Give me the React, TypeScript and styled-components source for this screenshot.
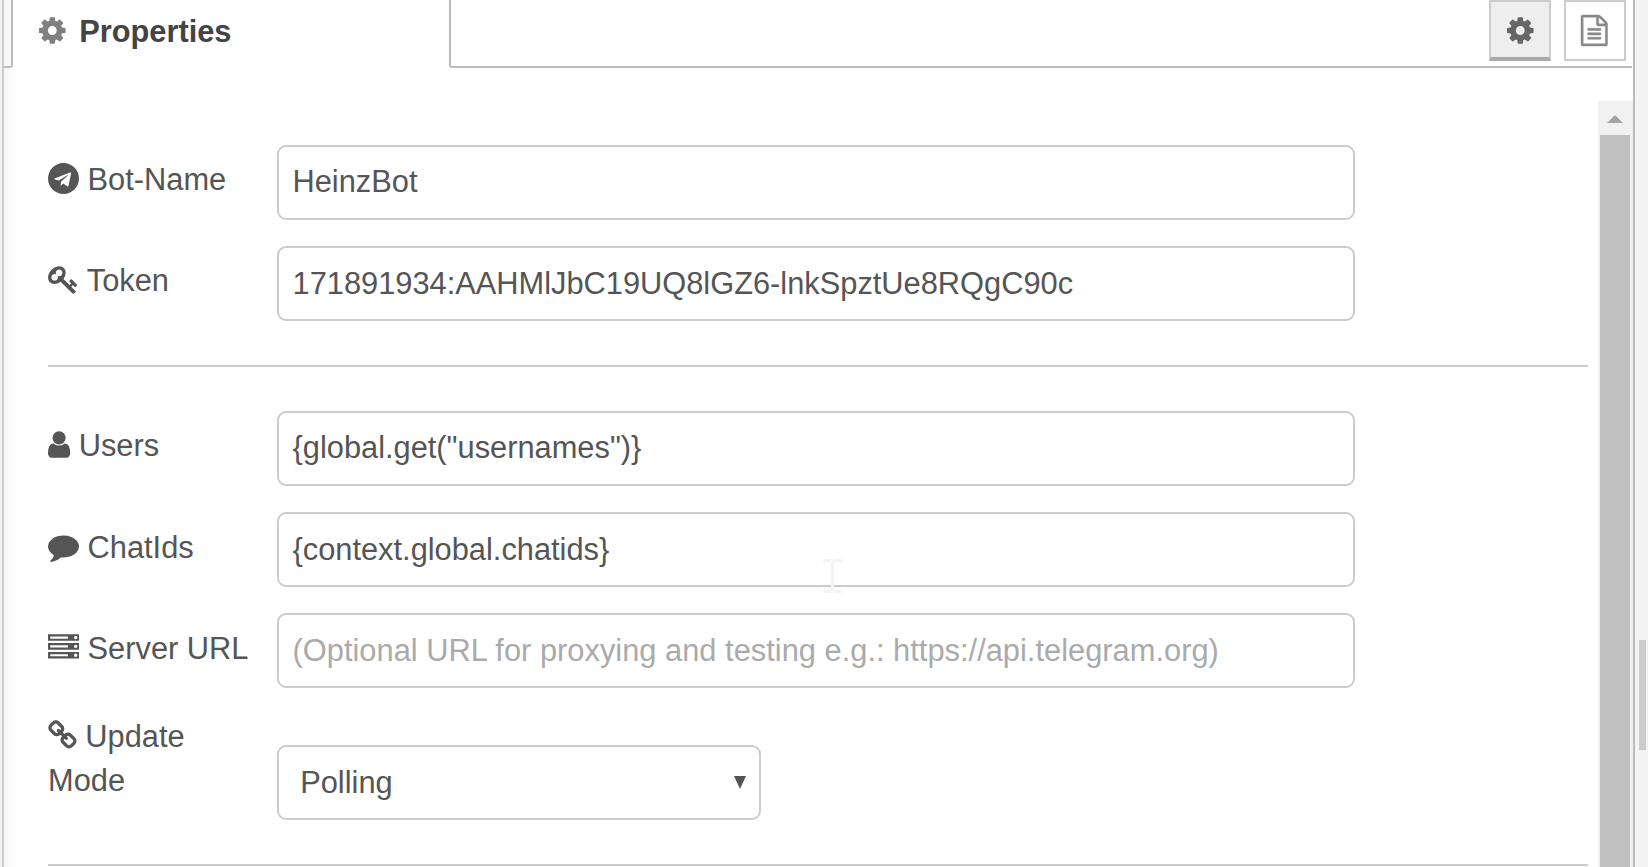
import React from "react";
import styled, { createGlobalStyle, css } from "styled-components";

const GlobalStyle = createGlobalStyle`
  body {
    margin: 0;
    background: #f3f3f3;
    overflow: hidden;
  }
  * { box-sizing: border-box; }
`;

const icons = {
  cog: {
    x: 128, w: 1536,
    d: "M1152 896q0-106-75-181t-181-75-181 75-75 181 75 181 181 75 181-75 75-181zm512-109v222q0 12-8 23t-20 13l-185 28q-19 54-39 91 35 50 107 138 10 12 10 25t-9 23q-27 37-99 108t-94 71q-12 0-26-9l-138-108q-44 23-91 38-16 136-29 186-7 28-36 28h-222q-14 0-24.5-8.5t-11.5-21.5l-28-184q-49-16-90-37l-141 107q-10 9-25 9-14 0-25-11-126-114-165-168-7-10-7-23 0-12 8-23 15-21 51-66.5t54-70.5q-27-50-41-99l-183-27q-13-2-21-12.5t-8-23.5v-222q0-12 8-23t19-13l186-28q14-46 39-92-40-57-107-138-10-12-10-24 0-10 9-23 26-36 98.5-107.5t94.5-71.5q13 0 26 10l138 107q44-23 91-38 16-136 29-186 7-28 36-28h222q14 0 24.5 8.5t11.5 21.5l28 184q49 16 90 37l142-107q9-9 24-9 13 0 25 10 129 119 165 170 7 8 7 22 0 12-8 23-15 21-51 66.5t-54 70.5q26 50 41 98l183 28q13 2 21 12.5t8 23.5z",
  },
  file: {
    x: 128, w: 1536,
    d: "M1596 380q28 28 48 76t20 88v1152q0 40-28 68t-68 28h-1344q-40 0-68-28t-28-68v-1600q0-40 28-68t68-28h896q40 0 88 20t76 48zm-444-244v376h376q-10-29-22-41l-313-313q-12-12-41-22zm384 1528v-1024h-416q-40 0-68-28t-28-68v-416h-768v1536h1280zm-1024-864q0-14 9-23t23-9h704q14 0 23 9t9 23v64q0 14-9 23t-23 9h-704q-14 0-23-9t-9-23v-64zm736 224q14 0 23 9t9 23v64q0 14-9 23t-23 9h-704q-14 0-23-9t-9-23v-64q0-14 9-23t23-9h704zm0 256q14 0 23 9t9 23v64q0 14-9 23t-23 9h-704q-14 0-23-9t-9-23v-64q0-14 9-23t23-9h704z",
  },
  telegram: {
    x: 0, w: 1792,
    d: "M1189 1307l147-693q9-44-10.5-63t-51.5-7l-864 333q-29 11-39.5 25t-2.5 26.5 32 19.5l221 69 513-323q21-14 32-6 7 5-4 15l-415 375-16 228q23 0 45-22l108-104 224 165q64 36 81-38zm603-411q0 182-71 348t-191 286-286 191-348 71-348-71-286-191-191-286-71-348 71-348 191-286 286-191 348-71 348 71 286 191 191 286 71 348z",
  },
  key: {
    x: 0, w: 1780,
    d: "M832 512q0-80-56-136t-136-56-136 56-56 136q0 42 19 83-41-19-83-19-80 0-136 56t-56 136 56 136 136 56 136-56 56-136q0-42-19-83 41 19 83 19 80 0 136-56t56-136zm851 704q0 17-49 66t-66 49q-9 0-28.5-16t-36.5-33-38.5-40-24.5-26l-96 96 220 220q28 28 28 68 0 42-39 81t-81 39q-40 0-68-28l-671-671q-176 131-365 131-163 0-265.5-102.5t-102.5-265.5q0-160 95-313t248-248 313-95q163 0 265.5 102.5t102.5 265.5q0 189-131 365l355 355 96-96q-3-3-26-24.5t-40-38.5-33-36.5-16-28.5q0-17 49-66t66-49q13 0 23 10 6 6 46 44.5t82 79.5 86.5 86 73 78 28.5 41z",
  },
  user: {
    x: 256, w: 1280,
    d: "M1536 1399q0 109-62.5 187t-150.5 78h-854q-88 0-150.5-78t-62.5-187q0-85 8.5-160.5t31.5-152 58.5-131 94-89 134.5-34.5q131 128 313 128t313-128q76 0 134.5 34.5t94 89 58.5 131 31.5 152 8.5 160.5zm-256-887q0 159-112.5 271.5t-271.5 112.5-271.5-112.5-112.5-271.5 112.5-271.5 271.5-112.5 271.5 112.5 112.5 271.5z",
  },
  comment: {
    x: 0, w: 1792,
    d: "M1792 896q0 174-120 321.5t-326 233-450 85.5q-70 0-145-8-198 175-460 242-49 14-114 22-17 2-30.5-9t-17.5-29v-1q-3-4-.5-12t2-10 4.5-9.5l6-9 7-8.5 8-9q7-8 31-34.5t34.5-38 31-39.5 32.5-51 27-59 26-76q-157-89-247.5-220t-90.5-281q0-130 71-248.5t191-204.5 286-136.5 348-50.5q244 0 450 85.5t326 233 120 321.5z",
  },
  server: {
    x: 0, w: 1792,
    d: "M128 1408h1024v-128h-1024v128zm0-512h1024v-128h-1024v128zm1568 448q0-40-28-68t-68-28-68 28-28 68 28 68 68 28 68-28 28-68zm-1568-960h1024v-128h-1024v128zm1568 448q0-40-28-68t-68-28-68 28-28 68 28 68 68 28 68-28 28-68zm0-512q0-40-28-68t-68-28-68 28-28 68 28 68 68 28 68-28 28-68zm96 832v384h-1792v-384h1792zm0-512v384h-1792v-384h1792zm0-512v384h-1792v-384h1792z",
  },
  chain: {
    x: 64, w: 1664,
    d: "M1520 1216q0-40-28-68l-208-208q-28-28-68-28-42 0-72 32 3 3 19 18.5t21.5 21.5 15 19 13 25.5 3.5 27.5q0 40-28 68t-68 28q-15 0-27.5-3.5t-25.5-13-19-15-21.5-21.5-18.5-19q-33 31-33 73 0 40 28 68l206 207q27 27 68 27 40 0 68-26l147-146q28-28 28-67zm-703-705q0-40-28-68l-206-207q-28-28-68-28-39 0-68 27l-147 146q-28 28-28 67 0 40 28 68l208 208q27 27 68 27 42 0 72-31-3-3-19-18.5t-21.5-21.5-15-19-13-25.5-3.5-27.5q0-40 28-68t68-28q15 0 27.5 3.5t25.5 13 19 15 21.5 21.5 18.5 19q33-31 33-73zm895 705q0 120-85 203l-147 146q-83 83-203 83-121 0-204-85l-206-207q-83-83-83-203 0-123 88-209l-88-88q-86 88-208 88-120 0-204-84l-208-208q-84-84-84-204t85-203l147-146q83-83 203-83 121 0 204 85l206 207q83 83 83 203 0 123-88 209l88 88q86-88 208-88 120 0 204 84l208 208q84 84 84 204z",
  },
};

type IconName = keyof typeof icons;

const Glyph = styled.svg`
  display: inline-block;
  height: 31px;
  vertical-align: -4px;
  fill: currentColor;
  flex: none;
  overflow: visible;
`;

function Icon({ name }: { name: IconName }) {
  const { x, w, d } = icons[name];
  return (
    <Glyph viewBox={`${x} 0 ${w} 1792`} width={(w / 1792) * 31} aria-hidden>
      <path d={d} />
    </Glyph>
  );
}

const Window = styled.div`
  display: flex;
  width: 1648px;
  height: 867px;
  overflow: hidden;
  position: relative;
  padding-left: 2px;
  font-family: "Liberation Sans", Arial, sans-serif;
  font-size: 30.8px;
  line-height: 44px;
  color: #555;
`;

const Panel = styled.main`
  display: flex;
  flex-direction: column;
  width: 1633px;
  border-left: 2px solid #ccc;
  border-right: 2px solid #bbb;
  background: linear-gradient(to right, #f6f6f6, #fff 12px);
`;

const TabBar = styled.header`
  display: flex;
  height: 68px;
  flex: none;
  margin-right: 1px;
`;

const PreviousTab = styled.div`
  width: 9px;
  border: solid #bbb;
  border-width: 0 2px 2px 0;
  border-bottom-right-radius: 3px;
`;

const ActiveTab = styled.h1`
  display: flex;
  align-items: flex-start;
  gap: 13.2px;
  width: 436px;
  margin: 0;
  padding: 10px 0 0 26.4px;
  background: #fff;
  color: #444;
  font-size: 30.8px;
  line-height: 44px;

  svg { color: #808080; margin-top: 5.2px; }
`;

const TabActions = styled.div`
  display: flex;
  flex: 1;
  justify-content: flex-end;
  gap: 13px;
  padding-right: 6px;
  border: solid #bbb;
  border-width: 0 0 2px 2px;
  border-bottom-left-radius: 3px;
  background: #fff;
`;

const ActionButton = styled.button<{ $active?: boolean }>`
  display: flex;
  justify-content: center;
  align-items: center;
  width: 62px;
  height: 61px;
  padding: 0 1px 1px 0;
  border: 2px solid #ccc;
  background: #fff;
  color: #888;

  path {
    stroke: currentColor;
    stroke-width: 26px;
  }

  ${(p) =>
    p.$active &&
    css`
      padding: 1px 0 0;
      border-bottom: 4px solid #aaa;
      background: #eee;
      color: #666;

      path { stroke: none; }
    `}
`;

const Body = styled.div`
  display: flex;
  flex: 1;
  min-height: 0;
  padding-top: 33px;
`;

const Form = styled.form`
  width: 1540px;
  margin: 44px 10px 0 44px;
  flex: none;
`;

const Row = styled.div<{ $height?: number; $last?: boolean }>`
  display: flex;
  height: ${(p) => p.$height ?? 75}px;
  margin-bottom: ${(p) => (p.$last ? 0 : 26)}px;
`;

const Label = styled.label<{ $top: number }>`
  width: 229px;
  flex: none;
  padding-top: ${(p) => p.$top}px;
  white-space: pre-line;
`;

const Field = styled.div<{ $top?: number; $placeholder?: boolean }>`
  width: 1078px;
  height: 75px;
  padding: ${(p) => p.$top ?? 14}px 13.5px 0;
  border: 2px solid #ccc;
  border-radius: 9px;
  background: #fff;
  color: ${(p) => (p.$placeholder ? "#aaa" : "#555")};
  letter-spacing: ${(p) => (p.$placeholder ? "0.02px" : "normal")};
  white-space: nowrap;
`;

const Select = styled(Field)`
  display: flex;
  justify-content: space-between;
  align-items: flex-start;
  align-self: flex-end;
  width: 484px;
  padding: 14px 13.5px 0 21.2px;
`;

const Arrow = styled.i`
  margin-top: 15px;
  border: solid transparent;
  border-width: 13px 6.5px 0;
  border-top-color: #555;
`;

const Divider = styled.hr`
  margin: 44px 0;
  border: 0;
  border-top: 2px solid #ccc;
`;

const Scrollbar = styled.div`
  display: flex;
  flex-direction: column;
  align-items: center;
  width: 35px;
  padding-right: 1px;
  background: #f1f1f1;
`;

const ScrollUp = styled.i`
  margin: 14px 0 12px;
  border: solid transparent;
  border-width: 0 8px 8px;
  border-bottom-color: #a3a3a3;
`;

const ScrollThumb = styled.div`
  width: 30px;
  flex: 1;
  background: #c1c1c1;
`;

const Gutter = styled.aside`
  flex: 1;
  padding: 640px 2px 0 4px;
`;

const GutterThumb = styled.div`
  height: 110px;
  background: #ccc;
`;

const TextCursor = styled.svg`
  position: absolute;
  left: 823px;
  top: 559px;
`;

export default function App() {
  return (
    <Window>
      <GlobalStyle />
      <Panel>
        <TabBar>
          <PreviousTab />
          <ActiveTab>
            <Icon name="cog" />
            Properties
          </ActiveTab>
          <TabActions>
            <ActionButton type="button" aria-label="Properties" $active>
              <Icon name="cog" />
            </ActionButton>
            <ActionButton type="button" aria-label="Description">
              <Icon name="file" />
            </ActionButton>
          </TabActions>
        </TabBar>
        <Body>
          <Form>
            <Row>
              <Label $top={13}><Icon name="telegram" /> Bot-Name</Label>
              <Field $top={13}>HeinzBot</Field>
            </Row>
            <Row $last>
              <Label $top={13}><Icon name="key" /> Token</Label>
              <Field>171891934:AAHMlJbC19UQ8lGZ6-lnkSpztUe8RQgC90c</Field>
            </Row>
            <Divider />
            <Row>
              <Label $top={13}><Icon name="user" /> Users</Label>
              <Field $top={13}>{'{global.get("usernames")}'}</Field>
            </Row>
            <Row>
              <Label $top={14}><Icon name="comment" /> ChatIds</Label>
              <Field>{"{context.global.chatids}"}</Field>
            </Row>
            <Row>
              <Label $top={14}><Icon name="server" /> Server URL</Label>
              <Field $placeholder>
                (Optional URL for proxying and testing e.g.: https://api.telegram.org)
              </Field>
            </Row>
            <Row $height={106} $last>
              <Label $top={1}><Icon name="chain" /> Update{"\n"}Mode</Label>
              <Select>
                Polling
                <Arrow />
              </Select>
            </Row>
            <Divider />
          </Form>
          <Scrollbar>
            <ScrollUp />
            <ScrollThumb />
          </Scrollbar>
        </Body>
      </Panel>
      <Gutter>
        <GutterThumb />
      </Gutter>
      <TextCursor width="19" height="34" viewBox="0 0 19 34" fill="#f3f4f4">
        <path d="M0 0h8v3H0zM11 0h8v3h-8zM8 2h3v30H8zM0 31h8v3H0zM11 31h8v3h-8z" />
      </TextCursor>
    </Window>
  );
}
